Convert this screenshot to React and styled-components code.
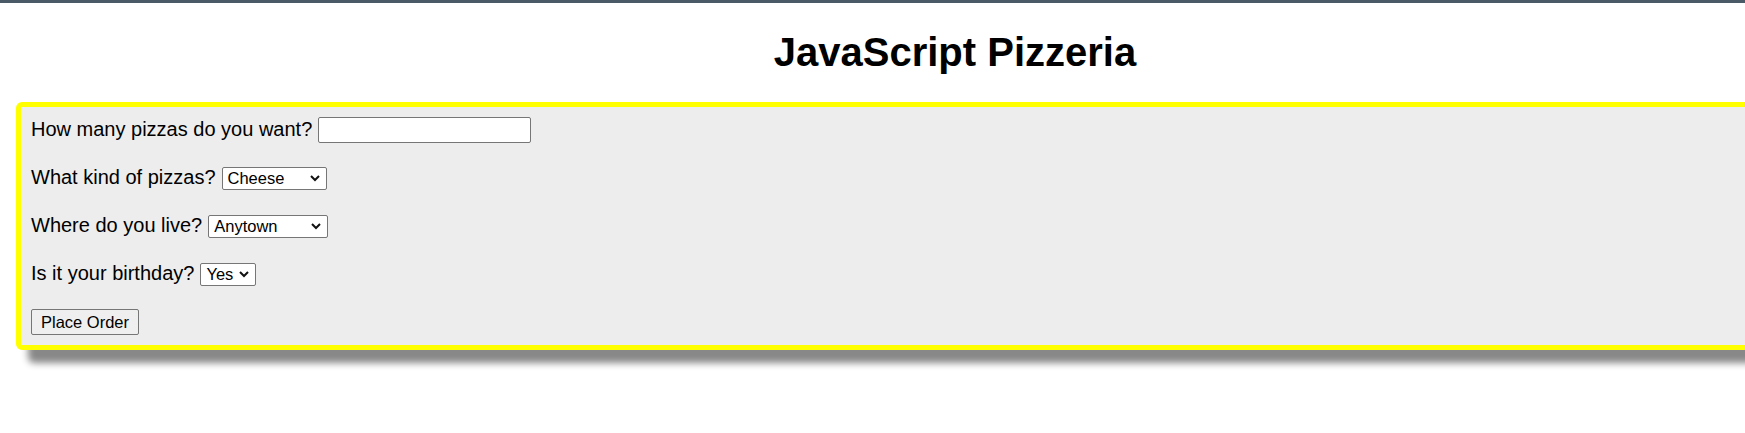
import React from 'react';
import styled, { createGlobalStyle } from 'styled-components';

const GlobalStyle = createGlobalStyle`
  html, body {
    margin: 0;
    padding: 0;
    background: #fff;
    overflow: hidden;
  }
  body {
    min-height: 100vh;
    font-family: 'Liberation Sans', Arial, sans-serif;
    color: #000;
  }
`;

const TopBar = styled.div`
  height: 3px;
  background: #4a5a66;
`;

const Page = styled.div`
  width: 1878px;
  padding: 0 16px;
`;

const Title = styled.h1`
  margin: 26px 0 27px;
  font-size: 40px;
  line-height: 46px;
  font-weight: 700;
  text-align: center;
`;

const OrderForm = styled.form`
  box-sizing: border-box;
  width: 100%;
  display: flex;
  flex-direction: column;
  gap: 20px;
  padding: 9px 10px;
  background: #ededed;
  border: 5px solid #ffff00;
  border-radius: 6px;
  box-shadow: 12px 13px 7px #888888;
`;

const Row = styled.div`
  display: flex;
  align-items: center;
  gap: 6px;
  height: 28px;
`;

const Label = styled.label`
  font-size: 20px;
  line-height: 23px;
  padding-bottom: 2px;
  color: #000;
  white-space: nowrap;
`;

const controlFont = `
  font-family: 'Liberation Sans', Arial, sans-serif;
  font-size: 16.5px;
  color: #000;
`;

const TextInput = styled.input`
  ${controlFont}
  box-sizing: border-box;
  width: 213px;
  height: 26px;
  margin: 0;
  padding: 1px 4px;
  background: #fff;
  border: 1px solid #767676;
  border-radius: 2px;
`;

const SelectBox = styled.span`
  position: relative;
  display: inline-flex;
  width: ${(p) => p.$w}px;
`;

const Select = styled.select`
  ${controlFont}
  appearance: none;
  -webkit-appearance: none;
  box-sizing: border-box;
  width: 100%;
  height: ${(p) => p.$h}px;
  margin: 0;
  padding: 0 20px 0 5px;
  background: #fff;
  border: 1px solid #767676;
  border-radius: 2px;
`;

const Chevron = styled.svg`
  position: absolute;
  right: 7px;
  top: 50%;
  margin-top: -3px;
  pointer-events: none;
`;

const OrderButton = styled.button`
  ${controlFont}
  box-sizing: border-box;
  width: 108px;
  height: 26px;
  margin: 0;
  padding: 0 6px;
  background: #efefef;
  border: 1px solid #767676;
  border-radius: 2px;
`;

function Dropdown({ width, height, options }) {
  return (
    <SelectBox $w={width}>
      <Select $h={height} defaultValue={options[0]}>
        {options.map((o) => (
          <option key={o} value={o}>{o}</option>
        ))}
      </Select>
      <Chevron width="10" height="7" viewBox="0 0 10 7">
        <polyline points="1,1 5,5 9,1" fill="none" stroke="#111" strokeWidth="2" />
      </Chevron>
    </SelectBox>
  );
}

export default function App() {
  return (
    <>
      <GlobalStyle />
      <TopBar />
      <Page>
        <Title>JavaScript Pizzeria</Title>
        <OrderForm onSubmit={(e) => e.preventDefault()}>
          <Row>
            <Label htmlFor="qty">How many pizzas do you want?</Label>
            <TextInput id="qty" type="text" />
          </Row>
          <Row>
            <Label>What kind of pizzas?</Label>
            <Dropdown width={105} height={23} options={['Cheese', 'Pepperoni', 'Veggie']} />
          </Row>
          <Row>
            <Label>Where do you live?</Label>
            <Dropdown width={120} height={23} options={['Anytown', 'Springfield', 'Riverside']} />
          </Row>
          <Row>
            <Label>Is it your birthday?</Label>
            <Dropdown width={56} height={23} options={['Yes', 'No']} />
          </Row>
          <Row>
            <OrderButton type="submit">Place Order</OrderButton>
          </Row>
        </OrderForm>
      </Page>
    </>
  );
}
